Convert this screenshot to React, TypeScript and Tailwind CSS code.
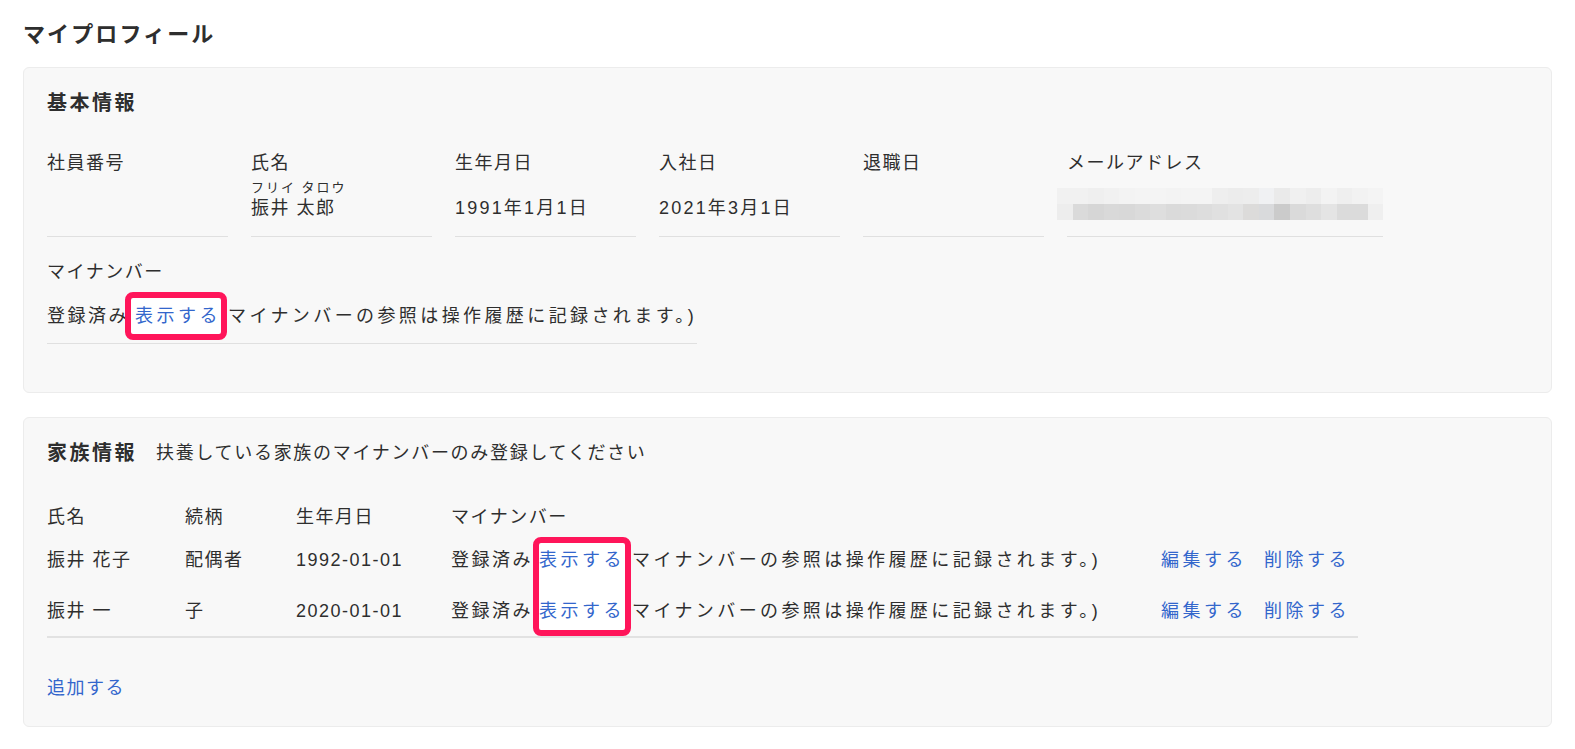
import { ReactNode } from "react";

interface BasicField {
  label: string;
  value?: string;
  kana?: string;
  wide?: boolean;
}

interface FamilyMember {
  name: string;
  relation: string;
  birthday: string;
}

const basicFields: BasicField[] = [
  { label: "社員番号" },
  { label: "氏名", value: "振井 太郎", kana: "フリイ タロウ" },
  { label: "生年月日", value: "1991年1月1日", wide: true },
  { label: "入社日", value: "2021年3月1日", wide: true },
  { label: "退職日" },
];

const family: FamilyMember[] = [
  { name: "振井 花子", relation: "配偶者", birthday: "1992-01-01" },
  { name: "振井 一", relation: "子", birthday: "2020-01-01" },
];

// モザイク処理済みのメールアドレス (上段・下段)
const mosaicTop = [
  "bg-[#f1f1f1]", "bg-[#f1f1f1]", "bg-[#efefef]", "bg-[#f1f1f1]", "bg-[#f3f3f3]",
  "bg-[#f4f4f4]", "bg-[#f4f4f4]", "bg-[#f3f3f3]", "bg-[#f4f4f4]", "bg-[#f4f4f4]",
  "bg-[#eeeeee]", "bg-[#ececec]", "bg-[#ededed]", "bg-[#f0f1f3]", "bg-[#eaeaea]",
  "bg-[#f0f0f0]", "bg-[#ededed]", "bg-[#f3f3f3]", "bg-[#efefef]", "bg-[#f2f2f2]",
  "bg-[#f4f4f4]",
];
const mosaicBottom = [
  "bg-[#ededed]", "bg-[#dadada]", "bg-[#d6d6d6]", "bg-[#d9d9d9]", "bg-[#d8d8d8]",
  "bg-[#dbdbdb]", "bg-[#dedede]", "bg-[#dadada]", "bg-[#dbdbdb]", "bg-[#dddddd]",
  "bg-[#e0e0e0]", "bg-[#e3e3e3]", "bg-[#dcdbda]", "bg-[#d9dadc]", "bg-[#cbcbcb]",
  "bg-[#dadada]", "bg-[#dedede]", "bg-[#e4e4e4]", "bg-[#dbdbdb]", "bg-[#dbdbdb]",
  "bg-[#efefef]",
];

function Card({ children, className = "" }: { children: ReactNode; className?: string }) {
  return (
    <div
      className={`rounded-md border border-[#ececec] bg-[#f8f8f8] px-[23px] ${className}`}
    >
      {children}
    </div>
  );
}

function LinkText({ children }: { children: ReactNode }) {
  return (
    <a className="relative z-10 cursor-pointer tracking-[3.5px] text-[#3366cc]">{children}</a>
  );
}

// 登録済み(表示する)(マイナンバーの参照は…) — 括弧は強調枠の下に隠れる
function MyNumberStatus({ marked }: { marked?: boolean }) {
  return (
    <span className="whitespace-nowrap">
      <span className="tracking-[2.5px]">登録済み</span>
      <span className="tracking-normal text-transparent">(</span>
      <span className="relative inline-block h-[26px]">
        {marked && (
          <span className="absolute left-[-10px] top-[-11px] z-0 h-[48px] w-[102px] rounded-lg border-[6px] border-[#ff155a] bg-white" />
        )}
        <LinkText>表示する</LinkText>
      </span>
      <span className="tracking-[-2.5px] text-transparent">)(</span>
      <span className="tracking-[3.4px]">マイナンバーの参照は操作履歴に記録されます。)</span>
    </span>
  );
}

export default function App() {
  return (
    <div className="min-h-screen overflow-hidden bg-white px-[23px] pt-[20px] font-['Liberation_Sans','Noto_Sans_CJK_JP',sans-serif] text-[18px] tracking-[1.5px] text-[#2e2e2e]">
      <h1 className="mb-[17px] text-[22px] font-bold leading-[30px] tracking-[2.1px]">
        マイプロフィール
      </h1>

      {/* 基本情報 */}
      <Card className="mb-[24px] pb-[48px] pt-[23px]">
        <h2 className="text-[20px] font-bold leading-[24px] tracking-[2.5px]">基本情報</h2>

        <div className="mt-[35px] flex gap-[23px] leading-[26px]">
          {basicFields.map((f) => (
            <div key={f.label} className="w-[181px] border-b border-[#e0e0e0]">
              <div>{f.label}</div>
              <div className="flex h-[60px] flex-col justify-end pb-[15px]">
                {f.kana && (
                  <div className="text-[13px] leading-[14px] tracking-[2px]">{f.kana}</div>
                )}
                {f.value && (
                  <div className={f.wide ? "tracking-[2.2px]" : ""}>{f.value}</div>
                )}
              </div>
            </div>
          ))}
          <div className="w-[316px] border-b border-[#e0e0e0]">
            <div>メールアドレス</div>
            <div className="flex h-[60px] flex-col justify-end pb-[15px]">
              <div className="-ml-[10px] mb-[1px] flex flex-col">
                <div className="flex">
                  {mosaicTop.map((c, i) => (
                    <div key={i} className={`h-[16px] w-[16px] ${c}`} />
                  ))}
                </div>
                <div className="flex">
                  {mosaicBottom.map((c, i) => (
                    <div key={i} className={`h-[16px] w-[16px] ${c}`} />
                  ))}
                </div>
              </div>
            </div>
          </div>
        </div>

        <div className="mt-[22px] leading-[26px]">
          <div>マイナンバー</div>
          <div className="mt-[18px] inline-block border-b border-[#e0e0e0] pb-[14px]">
            <MyNumberStatus marked />
          </div>
        </div>
      </Card>

      {/* 家族情報 */}
      <Card className="mb-[22px] pb-[25px] pt-[23px]">
        <div className="flex items-center leading-[24px]">
          <h2 className="text-[20px] font-bold tracking-[2.5px]">家族情報</h2>
          <span className="ml-[19px] tracking-[1.7px]">
            扶養している家族のマイナンバーのみ登録してください
          </span>
        </div>

        <div className="relative mt-[35px] w-[1311px] border-b-2 border-[#e2e2e2] leading-[26px]">
          <div className="grid h-[34px] grid-cols-[138px_111px_155px_710px_1fr] items-center">
            <div>氏名</div>
            <div>続柄</div>
            <div>生年月日</div>
            <div>マイナンバー</div>
            <div />
          </div>
          {family.map((m) => (
            <div
              key={m.name}
              className="grid h-[51px] grid-cols-[138px_111px_155px_710px_1fr] items-center"
            >
              <div>{m.name}</div>
              <div>{m.relation}</div>
              <div>{m.birthday}</div>
              <div>
                <MyNumberStatus />
              </div>
              <div className="flex gap-[17px]">
                <LinkText>編集する</LinkText>
                <LinkText>削除する</LinkText>
              </div>
            </div>
          ))}
          <span className="absolute left-[486px] top-[37px] h-[99px] w-[98px] rounded-lg border-[6px] border-[#ff155a] bg-white" />
        </div>

        <div className="mt-[37px] leading-[26px]">
          <a className="cursor-pointer tracking-[1.5px] text-[#3366cc]">追加する</a>
        </div>
      </Card>

      <Card className="h-[200px]">
        <div />
      </Card>
    </div>
  );
}
